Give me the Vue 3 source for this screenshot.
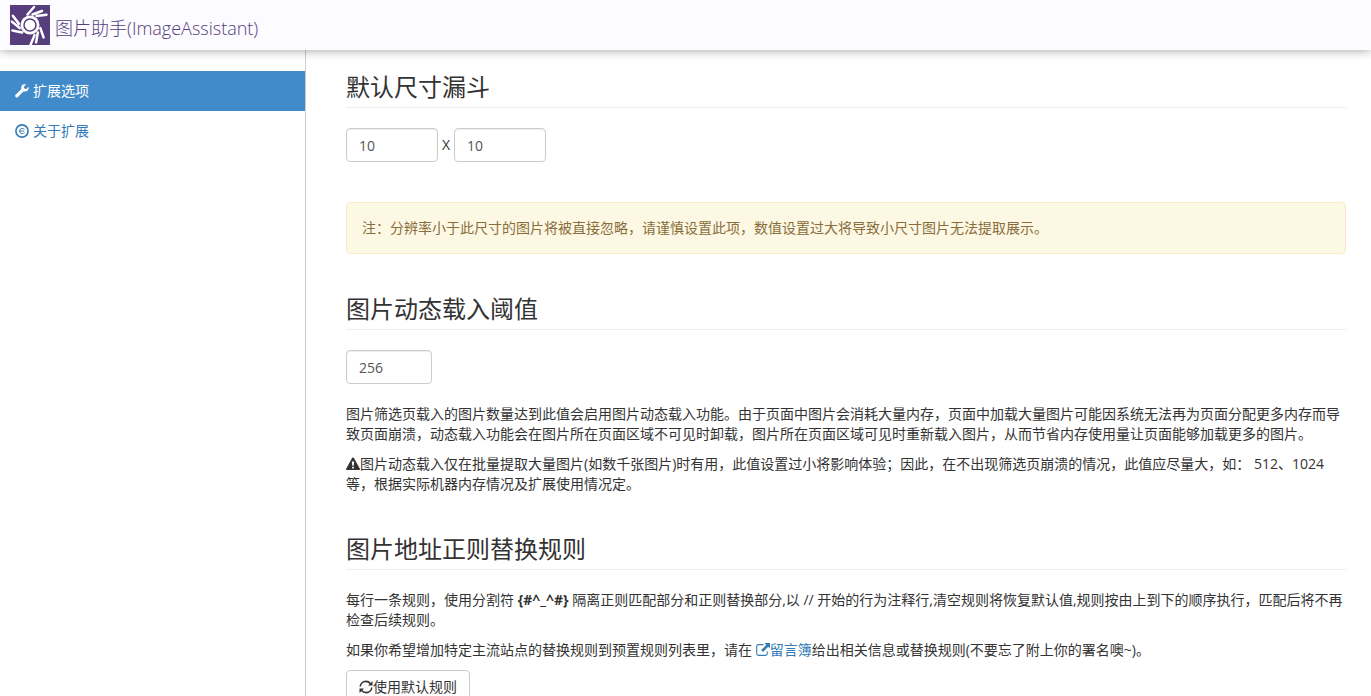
<script setup>
import { ref } from 'vue'

const minWidth = ref('10')
const minHeight = ref('10')
const threshold = ref('256')
</script>

<template>
  <div class="shell">
    <header class="topbar">
      <svg class="logo" viewBox="0 0 40 40" aria-hidden="true">
        <rect width="40" height="40" fill="#563d7c" />
        <g fill="none" stroke="#fff" stroke-width="2.5" stroke-linecap="round">
          <path d="M17.500 9.500L24 2M22.500 9.500L32 6M26.500 11L36.500 9.700" />
          <path d="M17.500 9.500L24 2M22.500 9.500L32 6M26.500 11L36.500 9.700" transform="rotate(120 20 20)" />
          <path d="M17.500 9.500L24 2M22.500 9.500L32 6M26.500 11L36.500 9.700" transform="rotate(240 20 20)" />
        </g>
        <circle cx="20" cy="20" r="9.500" fill="#fff" />
        <circle cx="20" cy="20" r="6" fill="none" stroke="#563d7c" stroke-width="1.500" />
      </svg>
      <span class="brand">图片助手(ImageAssistant)</span>
    </header>

    <div class="body">
      <nav class="sidebar">
        <a class="item active" href="#options">
          <svg class="icon" viewBox="0 0 14 14" aria-hidden="true">
            <path fill="currentColor" d="M13.600 2.800L11.400 5 9.200 4.600 8.900 2.600 11.200.4C9.700-.2 7.800.2 6.800 1.500 6.100 2.500 6 3.700 6.400 4.900L.6 10.700C0 11.300 0 12.300.6 13c.7.700 1.700.7 2.400 0l5.700-5.800c1.300.5 2.900.2 3.900-.8 1-.9 1.400-2.300 1-3.600z" />
          </svg>
          <span>扩展选项</span>
        </a>
        <a class="item" href="#about">
          <svg class="icon" viewBox="0 0 14 14" aria-hidden="true">
            <circle cx="7" cy="7" r="6.100" fill="none" stroke="currentColor" stroke-width="1.600" />
            <path d="M9.500 5.300C9 4.700 8.400 4.500 7.200 4.500 5.500 4.500 4.600 5.400 4.600 7S5.500 9.500 7.200 9.500c1.200 0 1.800-.2 2.300-.8M5 7h4.200" fill="none" stroke="currentColor" stroke-width="1" />
          </svg>
          <span>关于扩展</span>
        </a>
      </nav>

      <main class="content">
        <section>
          <h3>默认尺寸漏斗</h3>
          <div class="size-row">
            <input v-model="minWidth" class="field" type="text" aria-label="宽度" />
            <span>X</span>
            <input v-model="minHeight" class="field" type="text" aria-label="高度" />
          </div>
          <div class="note">注：分辨率小于此尺寸的图片将被直接忽略，请谨慎设置此项，数值设置过大将导致小尺寸图片无法提取展示。</div>
        </section>

        <section>
          <h3>图片动态载入阈值</h3>
          <div class="threshold-row">
            <input v-model="threshold" class="field short" type="text" aria-label="图片动态载入阈值" />
          </div>
          <p>图片筛选页载入的图片数量达到此值会启用图片动态载入功能。由于页面中图片会消耗大量内存，页面中加载大量图片可能因系统无法再为页面分配更多内存而导致页面崩溃，动态载入功能会在图片所在页面区域不可见时卸载，图片所在页面区域可见时重新载入图片，从而节省内存使用量让页面能够加载更多的图片。</p>
          <p><svg class="icon" viewBox="0 0 14 14" aria-hidden="true"><path fill="currentColor" fill-rule="evenodd" d="M6.200.8Q7 0 7.800.8L14 12Q14.200 13 13.300 13H.7Q-.2 13 0 12zM5.800 4.500L6.300 8.800H7.700L8.200 4.500zM6.100 9.800V11.400H7.900V9.800z" /></svg>图片动态载入仅在批量提取大量图片(如数千张图片)时有用，此值设置过小将影响体验；因此，在不出现筛选页崩溃的情况，此值应尽量大，如： 512、1024等，根据实际机器内存情况及扩展使用情况定。</p>
        </section>

        <section>
          <h3>图片地址正则替换规则</h3>
          <p>每行一条规则，使用分割符 <strong>{#^_^#}</strong> 隔离正则匹配部分和正则替换部分,以 // 开始的行为注释行,清空规则将恢复默认值,规则按由上到下的顺序执行，匹配后将不再检查后续规则。</p>
          <p>如果你希望增加特定主流站点的替换规则到预置规则列表里，请在 <a href="#guestbook"><svg class="icon" viewBox="0 0 14 14" aria-hidden="true"><path d="M7.500 1.600H2.500Q.7 1.600.7 3.400V10.600Q.7 12.400 2.500 12.400H9.500Q11.300 12.400 11.300 10.600V8.500" fill="none" stroke="currentColor" stroke-width="1.100" /><path d="M8.500 0H14V5.500L12.200 3.700 7 8.900 5.200 7.100 10.300 1.900z" fill="currentColor" /></svg>留言簿</a>给出相关信息或替换规则(不要忘了附上你的署名噢~)。</p>
          <button class="btn" type="button"><svg class="icon" viewBox="0 0 14 14" aria-hidden="true"><path d="M1.200 6.500C1.500 3.500 4 1.400 6.800 1.400 8.700 1.400 10.200 2.200 11.400 3.600M12.800 7.500C12.500 10.500 10 12.600 7.200 12.600 5.300 12.600 3.800 11.800 2.600 10.400" fill="none" stroke="currentColor" stroke-width="1.600" /><path d="M13.500 1V5.500H9zM.5 13V8.500H5z" fill="currentColor" /></svg>使用默认规则</button>
        </section>
      </main>
    </div>
  </div>
</template>

<style>
body {
  margin: 0;
}
</style>

<style scoped>
* {
  box-sizing: border-box;
}
.shell {
  display: flex;
  flex-direction: column;
  height: 100vh;
  background: #fff;
  color: #333;
  font: 14px/20px "Open Sans", "Noto Sans CJK SC", sans-serif;
}
.topbar {
  position: relative;
  z-index: 1;
  display: flex;
  flex: none;
  align-items: center;
  gap: 5px;
  height: 50px;
  padding: 0 10px;
  background: #fcfbff;
  box-shadow: 0 0 10px rgba(0, 0, 0, 0.4);
}
.logo {
  width: 40px;
  height: 40px;
}
.brand {
  padding-top: 6px;
  color: #563d7c;
  font-size: 18px;
  font-weight: 300;
}
.body {
  display: flex;
  flex: 1;
  min-height: 0;
}
.sidebar {
  flex: none;
  width: 306px;
  padding-top: 21px;
  border-right: 1px solid #ccc;
}
.item {
  display: flex;
  align-items: center;
  gap: 4px;
  height: 40px;
  padding: 0 15px;
}
.item.active {
  background: #428bca;
  color: #fff;
}
a {
  color: #337ab7;
  text-decoration: none;
}
.icon {
  width: 14px;
  height: 14px;
  vertical-align: -2px;
}
.content {
  flex: 1;
  min-width: 0;
  padding: 22px 25px 20px 40px;
  overflow: auto;
  scrollbar-width: none;
}
section {
  margin-bottom: 40px;
}
h3 {
  margin: 0 0 20px;
  padding-bottom: 6px;
  border-bottom: 1px solid #eee;
  font-size: 24px;
  font-weight: 400;
  line-height: 29px;
}
.size-row {
  display: flex;
  align-items: center;
  gap: 4px;
  margin-bottom: 40px;
}
.threshold-row {
  display: flex;
  margin-bottom: 20px;
}
.field {
  width: 92px;
  height: 34px;
  padding: 6px 12px;
  border: 1px solid #ccc;
  border-radius: 4px;
  background: #fff;
  box-shadow: inset 0 1px 1px rgba(0, 0, 0, 0.075);
  color: #555;
  font: inherit;
}
.field.short {
  width: 86px;
}
.note {
  padding: 15px;
  border: 1px solid #faebcc;
  border-radius: 4px;
  background: #fcf8e3;
  color: #8a6d3b;
}
p {
  margin: 0 0 10px;
}
.btn {
  height: 34px;
  padding: 6px 12px;
  border: 1px solid #ccc;
  border-radius: 4px;
  background: #fff;
  color: #333;
  font: inherit;
}
</style>
